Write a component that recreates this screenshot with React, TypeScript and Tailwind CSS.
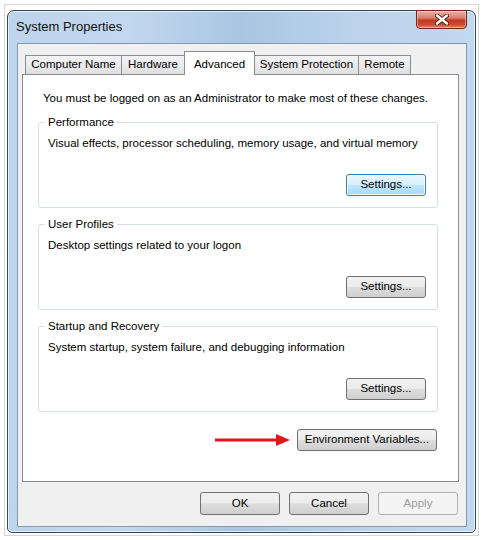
import React from 'react';

const tabs = [
  { label: 'Computer Name', w: 'w-[97px]' },
  { label: 'Hardware', w: 'w-[64px]' },
  { label: 'Advanced', w: 'w-[71px]', active: true },
  { label: 'System Protection', w: 'w-[105px]' },
  { label: 'Remote', w: 'w-[53px]' },
];

const groups = [
  {
    title: 'Performance',
    text: 'Visual effects, processor scheduling, memory usage, and virtual memory',
    focused: true,
  },
  { title: 'User Profiles', text: 'Desktop settings related to your logon' },
  {
    title: 'Startup and Recovery',
    text: 'System startup, system failure, and debugging information',
  },
];

type BtnProps = {
  children: React.ReactNode;
  className?: string;
  focused?: boolean;
  disabled?: boolean;
};

const WinButton: React.FC<BtnProps> = ({ children, className = '', focused, disabled }) => {
  let look =
    'border-[#707070] bg-[linear-gradient(180deg,#f2f2f2_0%,#ebebeb_48%,#dddddd_52%,#cfcfcf_100%)] text-black';
  if (focused) {
    look =
      'border-[#3c7fb1] bg-[linear-gradient(180deg,#eaf6fd_0%,#d9f0fc_48%,#bee6fd_52%,#a7d9f5_100%)] text-black shadow-[inset_0_0_0_1px_#f4fbff]';
  }
  if (disabled) {
    look = 'border-[#adb2b5] bg-[#f4f4f4] text-[#9c9c9c]';
  }
  return (
    <button
      className={`h-[22px] rounded-[3px] border flex items-center justify-center leading-none ${look} ${className}`}
    >
      {children}
    </button>
  );
};

const App: React.FC = () => {
  return (
    <div className="w-[483px] h-[540px] bg-white p-[4px] font-['Liberation_Sans',Arial,sans-serif] text-[11.5px] text-black">
      <div className="h-[532px] border border-[#d6d6d6] pl-[2px] pt-[5px]">
        {/* Window */}
        <div className="w-[469px] h-[523px] rounded-t-[7px] rounded-b-[5px] border border-[#34475c] bg-[linear-gradient(90deg,#bcd4ec_0%,#c3d8ee_25%,#aac5e2_50%,#bcd3eb_75%,#c2d8ee_100%)] flex flex-col shadow-[inset_0_0_0_1px_rgba(255,255,255,0.6)]">
          {/* Title bar */}
          <div className="h-[32px] flex justify-between">
            <div className="pl-[8px] pt-[6px] text-[13px] text-[#111]">System Properties</div>
            <div className="-mt-px mr-[8px] w-[51px] h-[19px] rounded-b-[4px] border border-[#6b2a20] bg-[linear-gradient(180deg,#eab0a4_0%,#dc806d_40%,#c13a23_55%,#c94a30_80%,#e08a70_100%)] flex items-center justify-center shadow-[inset_0_0_0_1px_rgba(255,220,210,0.5)]">
              <svg width="14" height="11" viewBox="0 0 14 11">
                <path
                  d="M2 1.5 L12 9.5 M12 1.5 L2 9.5"
                  stroke="#5a1a12"
                  strokeWidth="4.2"
                  strokeLinecap="round"
                />
                <path
                  d="M2 1.5 L12 9.5 M12 1.5 L2 9.5"
                  stroke="#ffffff"
                  strokeWidth="2.4"
                  strokeLinecap="round"
                />
              </svg>
            </div>
          </div>

          {/* Client area */}
          <div className="ml-[9px] w-[450px] h-[484px] bg-[#f0f0f0] border border-[#8199b4] flex flex-col">
            {/* Tabs */}
            <div className="mt-[7px] ml-[7px] h-[23px] flex items-end">
              {tabs.map((t, i) =>
                t.active ? (
                  <div
                    key={t.label}
                    className={`${t.w} h-[24px] -mb-px -ml-px relative z-10 bg-white border border-b-0 border-[#898c95] flex items-start justify-center pt-[4px]`}
                  >
                    {t.label}
                  </div>
                ) : (
                  <div
                    key={t.label}
                    className={`${t.w} h-[19px] ${i > 0 ? '-ml-px' : ''} bg-[linear-gradient(180deg,#f3f3f3_0%,#ebebeb_50%,#dedede_100%)] border border-b-0 border-[#898c95] flex items-center justify-center`}
                  >
                    {t.label}
                  </div>
                )
              )}
            </div>

            {/* Tab panel */}
            <div className="ml-[4px] w-[437px] h-[408px] bg-white border border-[#898c95] flex flex-col">
              <div className="pt-[15px] pl-[20px] leading-[16px]">
                You must be logged on as an Administrator to make most of these changes.
              </div>

              <div className="mt-[8px] ml-[15px] w-[400px] flex flex-col gap-[8px]">
                {groups.map((g) => (
                  <fieldset
                    key={g.title}
                    className="h-[94px] border border-[#d5dfe5] rounded-[3px] pl-[6px] pr-[11px] pb-[11px]"
                  >
                    <legend className="px-[3px] leading-[16px]">{g.title}</legend>
                    <div className="pl-[3px] pt-[5px] leading-[16px]">{g.text}</div>
                    <div className="mt-[23px] flex justify-end">
                      <WinButton className="w-[80px]" focused={g.focused}>
                        Settings...
                      </WinButton>
                    </div>
                  </fieldset>
                ))}
              </div>

              <div className="mt-[17px] mr-[21px] flex items-center justify-end gap-[7px]">
                <svg width="75" height="12" viewBox="0 0 75 12">
                  <rect x="0" y="4.5" width="63" height="3" fill="#e3151b" />
                  <path d="M61 0 L75 6 L61 12 Z" fill="#e3151b" />
                </svg>
                <WinButton className="w-[140px]">Environment Variables...</WinButton>
              </div>
            </div>

            {/* Dialog buttons */}
            <div className="mt-[10px] mr-[8px] flex justify-end gap-[9px]">
              <WinButton className="w-[80px] h-[23px]">OK</WinButton>
              <WinButton className="w-[80px] h-[23px]">Cancel</WinButton>
              <WinButton className="w-[80px] h-[23px]" disabled>
                Apply
              </WinButton>
            </div>
          </div>
        </div>
      </div>
    </div>
  );
};

export default App;
